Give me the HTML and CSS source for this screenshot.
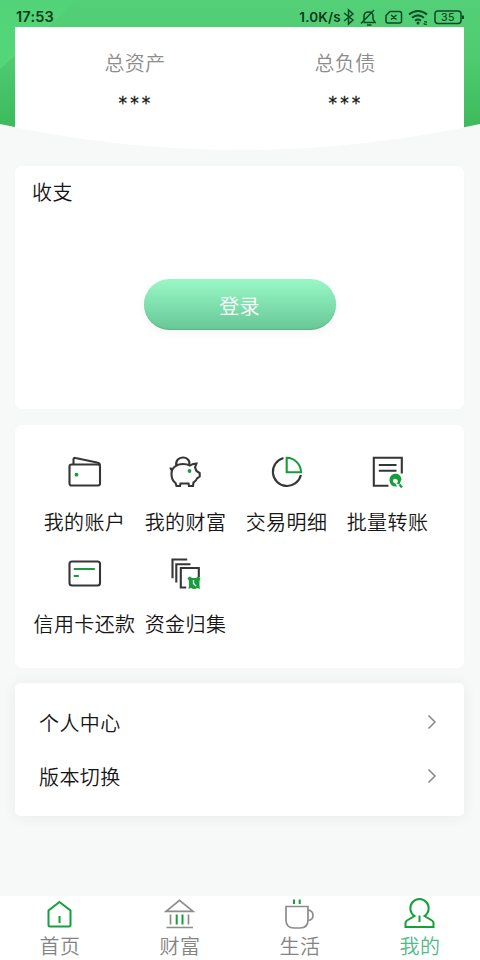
FILE: index.html
```html
<!DOCTYPE html>
<html lang="zh-CN">
<head>
<meta charset="utf-8">
<title>我的</title>
<link rel="stylesheet" href="styles.css">
</head>
<body>
<div class="app">
  <header class="hero">
    <svg class="hero-bg" viewBox="0 0 480 160" aria-hidden="true">
      <defs>
        <linearGradient id="base" x1="0" y1="0" x2="0" y2="1"><stop offset="0" stop-color="#53d078"/><stop offset=".35" stop-color="#50cb71"/><stop offset=".8" stop-color="#3cba5b"/></linearGradient>
        <linearGradient id="facet" x1="0" y1="0" x2="0" y2="1"><stop offset="0" stop-color="#53d379"/><stop offset="1" stop-color="#52d776"/></linearGradient>
      </defs>
      <path fill="url(#base)" d="M0 0H480V160H0Z"/>
      <path fill="url(#facet)" d="M0 0H75L58 18L0 69Z"/>
      <path fill="#fff" d="M15 27H464V155H15Z"/>
      <path fill="#f7f9f8" d="M0 124Q120 150 240 150T480 124V160H0Z"/>
    </svg>
    <div class="status">
      <span class="time">17:53</span>
      <span class="speed">1.0K/s</span>
      <svg class="status-icons" viewBox="0 0 124 20" aria-hidden="true">
        <path d="M3 6L12 13L7.500 17V3L12 7L3 14"/>
        <path d="M23 14.500V9C23 3.500 32 3.500 32 9V12L34 15.500H22.500M26 18H30.500M20 16.500L33 3"/>
        <path d="M49 4.500H58.500Q60.500 4.500 60.500 6.500V14Q60.500 16 58.500 16H47Q45 16 45 14V8.500ZM50 8L55.500 12.500M55.500 8L50 12.500"/>
        <path stroke-width="2" d="M68 7.500Q77 .5 86 7.500M71 10.700Q77 6 83 10.700M74 13.700Q77 11.500 80 13.700"/>
        <circle class="solid" cx="77" cy="16" r="1.500"/>
        <path stroke-width=".8" d="M83 14.500H85.500V16H83V17.500H86"/>
        <rect x="94" y="4" width="26" height="12.500" rx="3"/>
        <path stroke-width="2" d="M122 8.500V12"/>
        <text x="107" y="14">35</text>
      </svg>
    </div>
    <div class="totals">
      <div class="total"><span class="total-label">总资产</span><span class="stars">***</span></div>
      <div class="total"><span class="total-label">总负债</span><span class="stars">***</span></div>
    </div>
  </header>

  <main class="content">
    <section class="card income">
      <h2>收支</h2>
      <button class="login" type="button">登录</button>
    </section>

    <section class="card services">
      <a class="service">
        <svg viewBox="0 0 40 40"><rect x="4.500" y="12.500" width="30.500" height="21" rx="2"/><path d="M8.500 12V7.500Q8.500 5.500 10.500 6L32 10.500Q35 11 35 13.500"/><circle class="green-fill" cx="11.500" cy="22.700" r="1.900"/></svg>
        <span>我的账户</span>
      </a>
      <a class="service">
        <svg viewBox="0 0 40 40"><path d="M10.300 13.500C8.500 3 25 3 23.300 12.500"/><path d="M9 14.500Q12 12 17 12Q21 12 24 13.500Q27 11.500 30.500 11.500L29 15.500L30.500 19L33.700 21V24.500L31 26.500Q30 29.200 27.500 30.500L27 34H23L22.500 31.500H14.500L14 34H10.500L9.500 31Q5.500 28 5.500 22Q5.500 17 9 14.500ZM4.500 15.500Q4.500 18 7 18"/><circle class="green-fill" cx="23.500" cy="19" r="1.900"/></svg>
        <span>我的财富</span>
      </a>
      <a class="service">
        <svg viewBox="0 0 40 40"><path d="M16.500 6A14.200 14.200 0 1 0 33.900 23"/><path class="green" d="M19.700 5.800A14.500 14.500 0 0 1 34 20.300H19.700Z"/></svg>
        <span>交易明细</span>
      </a>
      <a class="service">
        <svg viewBox="0 0 40 40"><path d="M20.500 33.700H5.800V5.800H33.800V21.500M10.800 13H28.500M10.800 18.700H28.500"/><path class="green-fill" d="M21.500 28.500A6 6 0 0 1 33.500 27L31.500 32.500L28.500 31.500Q31 29.500 29 27.500Q26.500 26 25 28Q24.500 31 27.500 31.500L29 34.500Q22 35 21.500 28.500Z"/><path class="green" d="M31.500 32.500L34 35.500"/></svg>
        <span>批量转账</span>
      </a>
      <a class="service">
        <svg viewBox="0 0 40 40"><rect x="4.500" y="7.500" width="30.500" height="24" rx="2.500"/><path class="green" d="M8.800 15H29.800M8.800 22H13.800"/></svg>
        <span>信用卡还款</span>
      </a>
      <a class="service">
        <svg viewBox="0 0 40 40"><path d="M21.200 5.500H6.500V24.300M24.500 10.300H10.300V28.500M20.200 33.500H14.800V14H32.800V23"/><path class="green-fill" d="M21.500 24L24 22.500L26 24H30L32 22.500L34.500 24L33.500 27V32L34 35L31.500 34Q28 36 25 34L22.500 35L23 32V27Z"/><path class="hand" d="M27.500 26V29.500L30 32"/></svg>
        <span>资金归集</span>
      </a>
    </section>

    <section class="card menu">
      <a class="menu-row"><span>个人中心</span><svg viewBox="0 0 10 16"><path d="M1.500 1.500L8 8L1.500 14.500"/></svg></a>
      <a class="menu-row"><span>版本切换</span><svg viewBox="0 0 10 16"><path d="M1.500 1.500L8 8L1.500 14.500"/></svg></a>
    </section>
  </main>

  <nav class="tabs">
    <a class="tab">
      <svg viewBox="0 0 36 32"><path class="green" d="M17.500 4L28.500 12.500V27Q28.500 28.500 27 28.500H8Q6.500 28.500 6.500 27V12.500ZM17.500 18V25"/></svg>
      <span>首页</span>
    </a>
    <a class="tab">
      <svg viewBox="0 0 36 32"><path d="M4 13.300L17.500 2.300L31 13.300ZM8.500 16.500V26.500M26.500 16.500V26.500M4.500 29.500H31"/><path class="green" d="M14.700 16.500V26.500M20.500 16.500V26.500"/></svg>
      <span>财富</span>
    </a>
    <a class="tab">
      <svg viewBox="0 0 36 32"><path d="M4 8.500H26V22Q26 30 18 30H12Q4 30 4 22ZM26 12Q31 12.500 31 17.500Q31 22 26 22.500"/><path class="green" d="M12 1.500V6M17.700 1.500V6"/></svg>
      <span>生活</span>
    </a>
    <a class="tab active">
      <svg viewBox="0 0 36 32"><path class="green" d="M12.500 18A9.200 9.200 0 1 1 22.500 18L30 22.500Q31.500 23.500 31.500 25V29H3.500V25Q3.500 23.500 5 22.500ZM17.500 17.500V24"/></svg>
      <span>我的</span>
    </a>
  </nav>
</div>
</body>
</html>
```
FILE: styles.css
```css
* { box-sizing: border-box; }

body {
  margin: 0;
  background: #f7f9f8;
  color: #161616;
  font-family: Roboto, "Noto Sans CJK SC", sans-serif;
  font-size: 20px;
  letter-spacing: .4px;
  font-weight: 350;
}

svg { display: block; fill: none; }

.app {
  display: flex;
  flex-direction: column;
  width: 480px;
  height: 960px;
  overflow: hidden;
}

.hero { position: relative; height: 166px; flex: none; }
.hero-bg { position: absolute; inset: 0 auto auto 0; width: 480px; height: 160px; }

.status {
  position: relative;
  display: flex;
  align-items: center;
  height: 27px;
  padding: 7px 15px 0 16px;
  color: #0b3b1a;
  font-family: Inter, Roboto, sans-serif;
  line-height: 20px;
}
.time { font-size: 14.500px; font-weight: 600; letter-spacing: .2px; }
.speed { margin-left: auto; font-size: 13.500px; font-weight: 600; letter-spacing: .2px; }
.status-icons { width: 124px; height: 20px; stroke: #0b4a20; stroke-width: 1.500; }
.status-icons .solid { fill: #0b4a20; stroke: none; }
.status-icons text { fill: #0b4a20; stroke: none; font-size: 10.500px; font-weight: 500; text-anchor: middle; }

.totals {
  position: relative;
  display: grid;
  grid-template-columns: 1fr 1fr;
  margin: 0 30px;
  padding-top: 22px;
}
.total { display: flex; flex-direction: column; align-items: center; }
.total-label { color: #8c8c8c; font-weight: 350; line-height: 30px; }
.stars {
  margin-top: 12px;
  line-height: 24px;
  font-family: "DejaVu Sans", sans-serif;
  font-size: 17px;
  font-weight: 400;
  letter-spacing: 3.100px;
  margin-right: -2px;
  -webkit-text-stroke: .3px #161616;
}

.content { flex: 1; padding: 0 16px 0 15px; }
.card { background: #fff; border-radius: 7px; box-shadow: 0 0 4px rgba(0, 0, 0, .015); }

.income { height: 243px; padding: 12px 17px 0; }
.income h2 { margin: 0; font-size: 20px; font-weight: 350; line-height: 30px; }
.login {
  display: block;
  width: 192px;
  height: 51px;
  margin: 71px auto 0;
  padding: 1px 0 0;
  border: 0;
  border-radius: 26px;
  background: linear-gradient(#99f8c6, #67c796);
  box-shadow: 0 3px 9px rgba(60, 60, 100, .05), inset 0 -1px 1px rgba(50, 150, 100, .3);
  color: #fff;
  font: inherit;
  letter-spacing: .3px;
}

.services {
  display: grid;
  grid-template-columns: repeat(4, 101px);
  grid-auto-rows: 102px;
  height: 243px;
  margin-top: 16px;
  padding: 27px 19px;
}
.service { display: flex; flex-direction: column; align-items: center; }
.service svg { width: 40px; height: 40px; stroke: #363636; stroke-width: 2.100; }
.service span { margin-top: 16px; line-height: 30px; white-space: nowrap; }

.service .green { stroke: #149e39; }
.service .green-fill { fill: #149e39; stroke: none; }
.service .hand { stroke: #fff; stroke-width: 1.300; }

.menu {
  height: 133px;
  margin-top: 15px;
  padding: 13px 27px 0 24px;
  border-radius: 5px;
  box-shadow: 0 1px 14px rgba(40, 40, 50, .065);
}
.menu-row { display: flex; align-items: center; justify-content: space-between; height: 53.500px; }
.menu-row svg { width: 10px; height: 16px; margin-top: -1px; stroke: #888; stroke-width: 1.500; }

.tabs {
  display: grid;
  grid-template-columns: repeat(4, 1fr);
  flex: none;
  height: 64px;
  background: #fff;
  color: #848484;
  font-weight: 350;
}
.tab { display: flex; flex-direction: column; align-items: center; padding-top: 2px; }
.tab svg { width: 36px; height: 32px; stroke: #8c8c8c; stroke-width: 1.700; }
.tab .green { stroke: #14a03b; stroke-width: 2; }
.tab span { margin-top: 2px; line-height: 30px; }
.tab.active span { color: #4fbb88; }
```
